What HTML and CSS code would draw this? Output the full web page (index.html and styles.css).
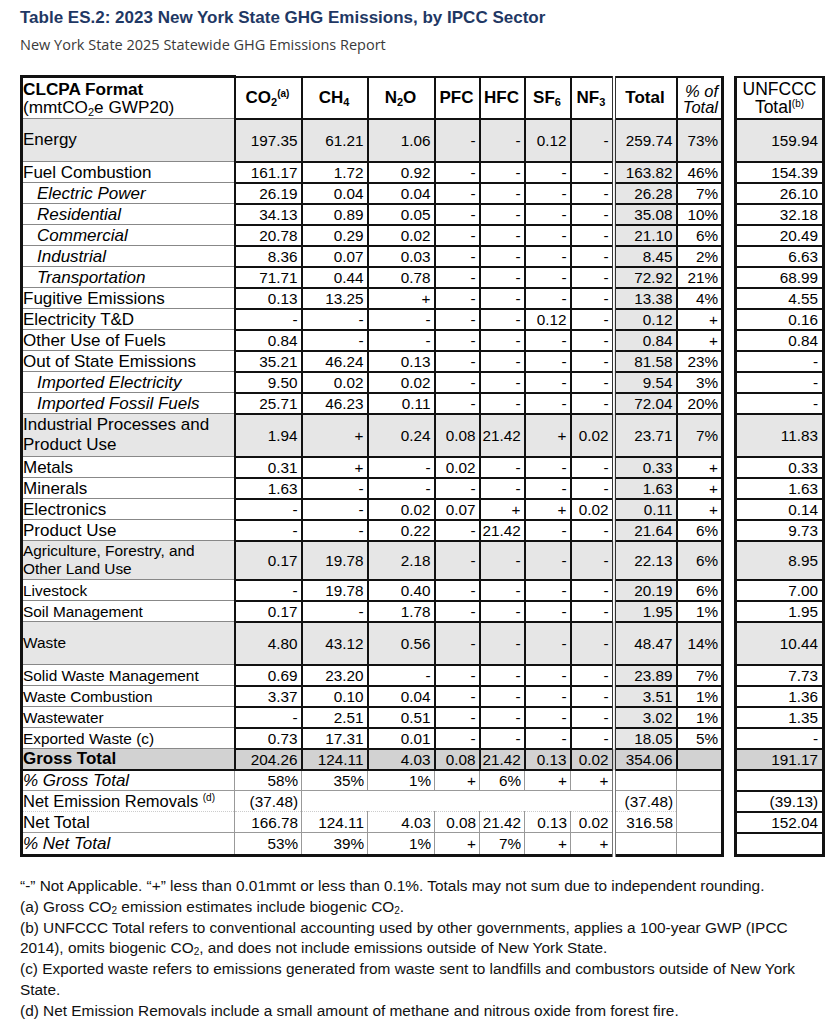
FILE: index.html
```html
<!DOCTYPE html>
<html>
<head>
<meta charset="utf-8">
<link rel="stylesheet" href="styles.css">
</head>
<body>
<h1 class="title">Table ES.2: 2023 New York State GHG Emissions, by IPCC Sector</h1>
<p class="subtitle">New York State 2025 Statewide GHG Emissions Report</p>

<table class="ghg">
<colgroup>
<col class="c-label"><col class="c-co2"><col class="c-ch4"><col class="c-n2o"><col class="c-pfc"><col class="c-hfc"><col class="c-sf6"><col class="c-nf3"><col class="c-tot"><col class="c-pct"><col class="c-gap"><col class="c-unf">
</colgroup>
<thead>
<tr class="head">
<th class="l"><b>CLCPA Format</b><br><span class="reg">(mmtCO<sub>2</sub>e GWP20)</span></th>
<th class="n">CO<sub>2</sub><sup>(a)</sup></th>
<th class="n">CH<sub>4</sub></th>
<th class="n">N<sub>2</sub>O</th>
<th class="n">PFC</th>
<th class="n">HFC</th>
<th class="n">SF<sub>6</sub></th>
<th class="n">NF<sub>3</sub></th>
<th class="n t">Total</th>
<th class="n p"><i>% of<br>Total</i></th>
<th class="g"></th>
<th class="u">UNFCCC<br>Total<sup>(b)</sup></th>
</tr>
</thead>
<tbody>
<tr class="sec tall"><td class="l">Energy</td><td class="n">197.35</td><td class="n">61.21</td><td class="n">1.06</td><td class="n">-</td><td class="n">-</td><td class="n">0.12</td><td class="n">-</td><td class="n t">259.74</td><td class="n p">73%</td><td class="g"></td><td class="u">159.94</td></tr>
<tr><td class="l">Fuel Combustion</td><td class="n">161.17</td><td class="n">1.72</td><td class="n">0.92</td><td class="n">-</td><td class="n">-</td><td class="n">-</td><td class="n">-</td><td class="n t">163.82</td><td class="n p">46%</td><td class="g"></td><td class="u">154.39</td></tr>
<tr class="sub"><td class="l">Electric Power</td><td class="n">26.19</td><td class="n">0.04</td><td class="n">0.04</td><td class="n">-</td><td class="n">-</td><td class="n">-</td><td class="n">-</td><td class="n t">26.28</td><td class="n p">7%</td><td class="g"></td><td class="u">26.10</td></tr>
<tr class="sub"><td class="l">Residential</td><td class="n">34.13</td><td class="n">0.89</td><td class="n">0.05</td><td class="n">-</td><td class="n">-</td><td class="n">-</td><td class="n">-</td><td class="n t">35.08</td><td class="n p">10%</td><td class="g"></td><td class="u">32.18</td></tr>
<tr class="sub"><td class="l">Commercial</td><td class="n">20.78</td><td class="n">0.29</td><td class="n">0.02</td><td class="n">-</td><td class="n">-</td><td class="n">-</td><td class="n">-</td><td class="n t">21.10</td><td class="n p">6%</td><td class="g"></td><td class="u">20.49</td></tr>
<tr class="sub"><td class="l">Industrial</td><td class="n">8.36</td><td class="n">0.07</td><td class="n">0.03</td><td class="n">-</td><td class="n">-</td><td class="n">-</td><td class="n">-</td><td class="n t">8.45</td><td class="n p">2%</td><td class="g"></td><td class="u">6.63</td></tr>
<tr class="sub"><td class="l">Transportation</td><td class="n">71.71</td><td class="n">0.44</td><td class="n">0.78</td><td class="n">-</td><td class="n">-</td><td class="n">-</td><td class="n">-</td><td class="n t">72.92</td><td class="n p">21%</td><td class="g"></td><td class="u">68.99</td></tr>
<tr><td class="l">Fugitive Emissions</td><td class="n">0.13</td><td class="n">13.25</td><td class="n">+</td><td class="n">-</td><td class="n">-</td><td class="n">-</td><td class="n">-</td><td class="n t">13.38</td><td class="n p">4%</td><td class="g"></td><td class="u">4.55</td></tr>
<tr><td class="l">Electricity T&amp;D</td><td class="n">-</td><td class="n">-</td><td class="n">-</td><td class="n">-</td><td class="n">-</td><td class="n">0.12</td><td class="n">-</td><td class="n t">0.12</td><td class="n p">+</td><td class="g"></td><td class="u">0.16</td></tr>
<tr><td class="l">Other Use of Fuels</td><td class="n">0.84</td><td class="n">-</td><td class="n">-</td><td class="n">-</td><td class="n">-</td><td class="n">-</td><td class="n">-</td><td class="n t">0.84</td><td class="n p">+</td><td class="g"></td><td class="u">0.84</td></tr>
<tr><td class="l">Out of State Emissions</td><td class="n">35.21</td><td class="n">46.24</td><td class="n">0.13</td><td class="n">-</td><td class="n">-</td><td class="n">-</td><td class="n">-</td><td class="n t">81.58</td><td class="n p">23%</td><td class="g"></td><td class="u">-</td></tr>
<tr class="sub"><td class="l">Imported Electricity</td><td class="n">9.50</td><td class="n">0.02</td><td class="n">0.02</td><td class="n">-</td><td class="n">-</td><td class="n">-</td><td class="n">-</td><td class="n t">9.54</td><td class="n p">3%</td><td class="g"></td><td class="u">-</td></tr>
<tr class="sub"><td class="l">Imported Fossil Fuels</td><td class="n">25.71</td><td class="n">46.23</td><td class="n">0.11</td><td class="n">-</td><td class="n">-</td><td class="n">-</td><td class="n">-</td><td class="n t">72.04</td><td class="n p">20%</td><td class="g"></td><td class="u">-</td></tr>
<tr class="sec tall"><td class="l">Industrial Processes and<br>Product Use</td><td class="n">1.94</td><td class="n">+</td><td class="n">0.24</td><td class="n">0.08</td><td class="n">21.42</td><td class="n">+</td><td class="n">0.02</td><td class="n t">23.71</td><td class="n p">7%</td><td class="g"></td><td class="u">11.83</td></tr>
<tr><td class="l">Metals</td><td class="n">0.31</td><td class="n">+</td><td class="n">-</td><td class="n">0.02</td><td class="n">-</td><td class="n">-</td><td class="n">-</td><td class="n t">0.33</td><td class="n p">+</td><td class="g"></td><td class="u">0.33</td></tr>
<tr><td class="l">Minerals</td><td class="n">1.63</td><td class="n">-</td><td class="n">-</td><td class="n">-</td><td class="n">-</td><td class="n">-</td><td class="n">-</td><td class="n t">1.63</td><td class="n p">+</td><td class="g"></td><td class="u">1.63</td></tr>
<tr><td class="l">Electronics</td><td class="n">-</td><td class="n">-</td><td class="n">0.02</td><td class="n">0.07</td><td class="n">+</td><td class="n">+</td><td class="n">0.02</td><td class="n t">0.11</td><td class="n p">+</td><td class="g"></td><td class="u">0.14</td></tr>
<tr><td class="l">Product Use</td><td class="n">-</td><td class="n">-</td><td class="n">0.22</td><td class="n">-</td><td class="n">21.42</td><td class="n">-</td><td class="n">-</td><td class="n t">21.64</td><td class="n p">6%</td><td class="g"></td><td class="u">9.73</td></tr>
<tr class="sec mid small"><td class="l">Agriculture, Forestry, and<br>Other Land Use</td><td class="n">0.17</td><td class="n">19.78</td><td class="n">2.18</td><td class="n">-</td><td class="n">-</td><td class="n">-</td><td class="n">-</td><td class="n t">22.13</td><td class="n p">6%</td><td class="g"></td><td class="u">8.95</td></tr>
<tr class="small"><td class="l">Livestock</td><td class="n">-</td><td class="n">19.78</td><td class="n">0.40</td><td class="n">-</td><td class="n">-</td><td class="n">-</td><td class="n">-</td><td class="n t">20.19</td><td class="n p">6%</td><td class="g"></td><td class="u">7.00</td></tr>
<tr class="small"><td class="l">Soil Management</td><td class="n">0.17</td><td class="n">-</td><td class="n">1.78</td><td class="n">-</td><td class="n">-</td><td class="n">-</td><td class="n">-</td><td class="n t">1.95</td><td class="n p">1%</td><td class="g"></td><td class="u">1.95</td></tr>
<tr class="sec tall small"><td class="l">Waste</td><td class="n">4.80</td><td class="n">43.12</td><td class="n">0.56</td><td class="n">-</td><td class="n">-</td><td class="n">-</td><td class="n">-</td><td class="n t">48.47</td><td class="n p">14%</td><td class="g"></td><td class="u">10.44</td></tr>
<tr class="small"><td class="l">Solid Waste Management</td><td class="n">0.69</td><td class="n">23.20</td><td class="n">-</td><td class="n">-</td><td class="n">-</td><td class="n">-</td><td class="n">-</td><td class="n t">23.89</td><td class="n p">7%</td><td class="g"></td><td class="u">7.73</td></tr>
<tr class="small"><td class="l">Waste Combustion</td><td class="n">3.37</td><td class="n">0.10</td><td class="n">0.04</td><td class="n">-</td><td class="n">-</td><td class="n">-</td><td class="n">-</td><td class="n t">3.51</td><td class="n p">1%</td><td class="g"></td><td class="u">1.36</td></tr>
<tr class="small"><td class="l">Wastewater</td><td class="n">-</td><td class="n">2.51</td><td class="n">0.51</td><td class="n">-</td><td class="n">-</td><td class="n">-</td><td class="n">-</td><td class="n t">3.02</td><td class="n p">1%</td><td class="g"></td><td class="u">1.35</td></tr>
<tr class="small"><td class="l">Exported Waste (c)</td><td class="n">0.73</td><td class="n">17.31</td><td class="n">0.01</td><td class="n">-</td><td class="n">-</td><td class="n">-</td><td class="n">-</td><td class="n t">18.05</td><td class="n p">5%</td><td class="g"></td><td class="u">-</td></tr>
<tr class="gross"><td class="l">Gross Total</td><td class="n">204.26</td><td class="n">124.11</td><td class="n">4.03</td><td class="n">0.08</td><td class="n">21.42</td><td class="n">0.13</td><td class="n">0.02</td><td class="n t">354.06</td><td class="n p"></td><td class="g"></td><td class="u">191.17</td></tr>
<tr class="low sub2"><td class="l">% Gross Total</td><td class="n">58%</td><td class="n">35%</td><td class="n">1%</td><td class="n">+</td><td class="n">6%</td><td class="n">+</td><td class="n">+</td><td class="n t"></td><td class="n p"></td><td class="g"></td><td class="u"></td></tr>
<tr class="low netem"><td class="l">Net Emission Removals <sup>(d)</sup></td><td class="n">(37.48)</td><td class="e"></td><td class="e"></td><td class="e"></td><td class="e"></td><td class="e"></td><td class="e"></td><td class="n t">(37.48)</td><td class="n p"></td><td class="g"></td><td class="u">(39.13)</td></tr>
<tr class="low nett"><td class="l">Net Total</td><td class="n">166.78</td><td class="n">124.11</td><td class="n">4.03</td><td class="n">0.08</td><td class="n">21.42</td><td class="n">0.13</td><td class="n">0.02</td><td class="n t">316.58</td><td class="n p"></td><td class="g"></td><td class="u">152.04</td></tr>
<tr class="low sub2 last"><td class="l">% Net Total</td><td class="n">53%</td><td class="n">39%</td><td class="n">1%</td><td class="n">+</td><td class="n">7%</td><td class="n">+</td><td class="n">+</td><td class="n t"></td><td class="n p"></td><td class="g"></td><td class="u"></td></tr>
</tbody>
</table>

<div class="notes">
<p>“-” Not Applicable. “+” less than 0.01mmt or less than 0.1%. Totals may not sum due to independent rounding.</p>
<p>(a) Gross CO<sub>2</sub> emission estimates include biogenic CO<sub>2</sub>.</p>
<p>(b) UNFCCC Total refers to conventional accounting used by other governments, applies a 100-year GWP (IPCC<br>2014), omits biogenic CO<sub>2</sub>, and does not include emissions outside of New York State.</p>
<p>(c) Exported waste refers to emissions generated from waste sent to landfills and combustors outside of New York<br>State.</p>
<p>(d) Net Emission Removals include a small amount of methane and nitrous oxide from forest fire.</p>
</div>
</body>
</html>
```

FILE: styles.css
```css
body {
  margin: 0;
  padding: 8px 0 0 20px;
  background: #fff;
  color: #000;
  font-family: "Liberation Sans", Arial, sans-serif;
}

.title {
  margin: 0;
  font-size: 17px;
  line-height: 20px;
  font-weight: 700;
  color: #1f3864;
}

.subtitle {
  margin: 7px 0 0;
  font-family: "Open Sans", sans-serif;
  font-size: 14.5px;
  line-height: 19px;
  color: #3a3a3a;
}

.ghg {
  margin-top: 21px;
  border-collapse: collapse;
  table-layout: fixed;
  width: 803px;
  font-size: 15.3px;
}

.c-label { width: 213px; }
.c-co2 { width: 67px; }
.c-ch4 { width: 66px; }
.c-n2o { width: 67px; }
.c-pfc { width: 45px; }
.c-hfc { width: 45px; }
.c-sf6 { width: 46px; }
.c-nf3 { width: 43px; }
.c-tot { width: 63px; }
.c-pct { width: 46px; }
.c-gap { width: 13px; }
.c-unf { width: 88px; }

.ghg tr { height: 21px; }
.ghg tr.head { height: 42px; }
.ghg tr.tall { height: 43px; }
.ghg tr.mid { height: 39px; }
.ghg tr.last { height: 23px; }

.ghg td, .ghg th {
  padding: 0 3px 0 2px;
  line-height: 17px;
  white-space: nowrap;
  vertical-align: middle;
  overflow: visible;
}

.ghg .n { text-align: right; border: 2px solid #111; }
.ghg .l {
  text-align: left;
  font-size: 17px;
  border-left: 3px solid #111;
  border-right: 2px solid #111;
  border-bottom: 1px solid #888;
  padding-left: 0;
}
.ghg .t { background: #e6e6e6; border-left: 4px double #333; }
.ghg .p { border-right: 3px solid #111; }
.ghg .g { border: none; background: #fff; padding: 0; }
.ghg .u {
  text-align: right;
  border: 2px solid #111;
  border-left: 3px solid #111;
  border-right: 3px solid #111;
  padding-right: 4px;
}

/* header */
.ghg th { font-weight: 700; border-top: 3px solid #111; border-bottom: 3px solid #111; }
.ghg th.n { text-align: center; font-size: 17px; background: #fff; }
.ghg th.l { line-height: 18px; font-size: 17.2px; }
.ghg th .reg { font-weight: 400; }
.ghg th.p { text-align: right; font-weight: 400; line-height: 16px; padding: 2px 3px 0 0; font-size: 16.5px; }
.ghg th.u { text-align: center; font-weight: 400; line-height: 18px; padding: 0; font-size: 17.5px; }
.ghg th.g { border: none; }
.ghg sub { font-size: 11px; vertical-align: -3px; line-height: 0; }
.ghg sup { font-size: 10px; vertical-align: 6px; line-height: 0; }
.ghg td sup { font-weight: 400; }

/* row kinds */
.ghg tr.sec td:not(.g) { background: #e6e6e6; }
.ghg tr.sec .l { line-height: 20px; }
.ghg tr.sub .l { font-style: italic; padding-left: 14px; }
.ghg tr.small .l { font-size: 15.4px; }
.ghg tr.small.sec .l { line-height: 18px; }

.ghg tr.gross td:not(.g) { background: #d2d2d2; }
.ghg tr.gross .l { font-weight: 700; border-bottom: 2px solid #111; }
.ghg tr.gross td.n { border-bottom: 2px solid #111; }

.ghg tr.low .n { border: 1px solid #999; }
.ghg tr.low .l { border-right: 1px solid #999; border-bottom: 1px solid #999; }
.ghg tr.low .t { background: #fff; border-left: 4px double #777; }
.ghg tr.low .p { border-right: 3px solid #111; }
.ghg tr.sub2 .l { font-style: italic; }

.ghg tr.netem .l { border-bottom: 1px dotted #ccc; font-size: 16.5px; }
.ghg tr.netem .n { border-bottom: 1px dotted #ccc; }
.ghg tr.netem .e { border: none; }
.ghg tr.nett .n { border-top: 1px dotted #ccc; }
.ghg tr.netem .p, .ghg tr.nett .p { border-top: none; border-bottom: none; }

.ghg tr.last td.l, .ghg tr.last td.n, .ghg tr.last td.u { border-bottom: 3px solid #111; }

.notes {
  margin-top: 19px;
  width: 810px;
  font-family: "Liberation Sans Narrow", "Arial Narrow", "Liberation Sans", sans-serif;
  font-size: 15.4px;
  line-height: 20.8px;
  color: #111;
}
.notes p { margin: 0; }
.notes sub { font-size: 10px; vertical-align: -2px; line-height: 0; }
```
